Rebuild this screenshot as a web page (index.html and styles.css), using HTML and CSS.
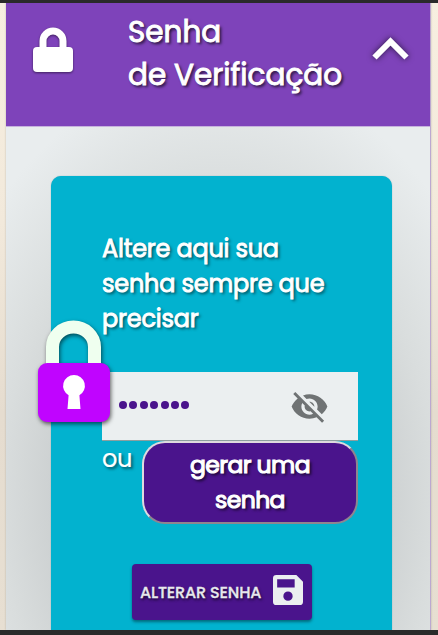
FILE: index.html
```html
<!DOCTYPE html>
<html lang="pt-BR">
<head>
<meta charset="utf-8">
<meta name="viewport" content="width=device-width, initial-scale=1">
<title>Senha de Verificação</title>
<link rel="stylesheet" href="styles.css">
</head>
<body>
<main class="panel">
  <header class="panel-header">
    <svg class="header-lock" viewBox="0 0 40 46" aria-hidden="true">
      <path d="M10 23V14a10 10 0 0 1 20 0v9" fill="none" stroke="#fff" stroke-width="7"/>
      <rect y="20" width="40" height="25" rx="4" fill="#fff"/>
    </svg>
    <h1 class="title">Senha<br>de Verificação</h1>
    <svg class="chevron" viewBox="0 0 38 24" aria-hidden="true">
      <path d="M2.5 20.5 18.5 4.5 34.5 20.5" fill="none" stroke="#fff" stroke-width="6"/>
    </svg>
  </header>
  <section class="panel-body">
    <form class="card">
      <p class="intro">Altere aqui sua<br>senha sempre que<br>precisar</p>
      <div class="field">
        <svg class="padlock" viewBox="0 0 84 114" aria-hidden="true">
          <path d="M14.5 52V33a21 20 0 0 1 42 0v19" fill="none" stroke="#efffef" stroke-width="13"/>
          <rect y="49" width="72" height="59" rx="9" fill="#c004ff"/>
          <path d="M36 61a10.8 10.8 0 0 1 5.4 20.2L42.5 95h-13l1.100-13.800A10.800 10.800 0 0 1 36 61z" fill="#fff"/>
        </svg>
        <div class="dots" role="img" aria-label="Senha oculta"><i></i><i></i><i></i><i></i><i></i><i></i><i></i></div>
        <svg class="eye" viewBox="0 0 24 24" aria-hidden="true">
          <path d="M12 7c2.760 0 5 2.240 5 5 0 .65-.13 1.260-.36 1.830l2.920 2.920c1.510-1.260 2.700-2.890 3.430-4.750-1.730-4.390-6-7.500-11-7.500-1.400 0-2.740.25-3.980.7l2.160 2.160C10.740 7.130 11.350 7 12 7zM2 4.270l2.280 2.280.46.46C3.080 8.300 1.780 10.020 1 12c1.730 4.390 6 7.500 11 7.500 1.550 0 3.030-.3 4.380-.84l.42.42L19.730 22 21 20.730 3.270 3 2 4.270zM7.530 9.800l1.550 1.550c-.05.21-.08.43-.08.65 0 1.660 1.340 3 3 3 .22 0 .44-.03.65-.08l1.550 1.550c-.67.33-1.410.53-2.200.53-2.760 0-5-2.240-5-5 0-.79.2-1.530.53-2.200zm4.310-.78 3.150 3.150.02-.16c0-1.660-1.340-3-3-3l-.17.01z"/>
        </svg>
      </div>
      <div class="generate-row">
        <span class="or">ou</span>
        <button class="generate" type="button">gerar uma<br>senha</button>
      </div>
      <button class="save" type="button">
        <span>ALTERAR SENHA</span>
        <svg class="disk" viewBox="3 3 18 18" aria-hidden="true">
          <path d="M17 3H5a2 2 0 0 0-2 2v14a2 2 0 0 0 2 2h14a2 2 0 0 0 2-2V7l-4-4zm-5 15.500a2.800 2.800 0 1 1 0-5.600 2.800 2.800 0 0 1 0 5.600zM16 10.500H5.500v-5H16v5z"/>
        </svg>
      </button>
    </form>
  </section>
</main>
</body>
</html>
```
FILE: styles.css
```css
* { box-sizing: border-box; }

body {
  margin: 0;
  height: 635px;
  overflow: hidden;
  padding: 0 7px 0 6px;
  border-top: 3px solid #2a2a2a;
  border-bottom: 5px solid #2a2a2a;
  background: linear-gradient(#f7efe0, #f2e9db 35%, #e5dccf 65%, #e7dfd2);
  font-family: Poppins, sans-serif;
  color: #fff;
}

.panel {
  height: 627px;
  display: flex;
  flex-direction: column;
  border-right: 1px solid #bba8d0;
  box-shadow: 0 0 2px rgba(0, 0, 0, .2);
}

.panel-header {
  height: 124px;
  flex: none;
  display: flex;
  align-items: flex-start;
  padding: 7px 20px 0 27px;
  background: #7e43ba;
  border-bottom: 1px solid #c6b2dd;
}

.header-lock {
  width: 40px;
  height: 46px;
  margin-top: 17px;
  flex: none;
  overflow: visible;
  filter: drop-shadow(0 1px 1px rgba(0, 0, 0, .5));
}

.title {
  margin: 0 0 0 55px;
  flex: 1;
  font-size: 29.500px;
  line-height: 43px;
  font-weight: 400;
  white-space: nowrap;
  -webkit-text-stroke: .9px #fff;
  text-shadow: 2px 2px 3px rgba(0, 0, 0, .75);
}

.chevron {
  width: 38px;
  height: 24px;
  margin: 27px 0 0;
  flex: none;
  overflow: visible;
  filter: drop-shadow(0 0 3px rgba(0, 0, 0, .65));
}

.panel-body {
  flex: 1;
  padding: 49px 38px 0 45px;
  background: radial-gradient(ellipse 290px 410px at 50% 74%, #b9bdbe 0%, #c8cccd 50%, #d9dddd 75%, #e9edee 105%);
}

.card {
  height: 454px;
  padding: 55px 34px 0 51px;
  border-radius: 10px 10px 0 0;
  background: #02b2cf;
  box-shadow: 0 0 1px rgba(0, 110, 130, .6);
}

.intro {
  margin: 0;
  font-size: 24px;
  line-height: 35px;
  font-weight: 400;
  letter-spacing: -.22px;
  white-space: nowrap;
  -webkit-text-stroke: .9px #fff;
  text-shadow: 2px 2px 3px rgba(0, 0, 0, .6);
}

.field {
  position: relative;
  width: 256px;
  height: 69px;
  margin-top: 36px;
  display: flex;
  align-items: center;
  justify-content: space-between;
  padding: 0 29px 0 17px;
  background: #ebeff0;
  border-bottom: 1px solid #8d9f9f;
}

.padlock {
  position: absolute;
  left: -64px;
  top: -58px;
  width: 84px;
  height: 114px;
  overflow: visible;
  filter: drop-shadow(1px 2px 2px rgba(0, 0, 0, .6));
}

.dots { display: flex; gap: 2.400px; margin-top: -3px; }
.dots i { width: 8px; height: 8px; border-radius: 50%; background: #4a148c; }
.eye { width: 39px; height: 39px; margin-top: 1px; fill: #6f7374; }

.generate-row { display: flex; height: 83px; }

.or {
  width: 40px;
  font-size: 24px;
  line-height: 35px;
  letter-spacing: -.3px;
  -webkit-text-stroke: .2px #fff;
  text-shadow: 2px 2px 3px rgba(0, 0, 0, .55);
}

.generate {
  width: 216px;
  height: 83px;
  padding: 0 0 1px;
  border: 2px solid;
  border-color: #dedade #8f858f #8f858f #dedade;
  border-radius: 23px;
  background: #4a148c;
  color: #fff;
  font: 400 23.500px/35px Poppins, sans-serif;
  letter-spacing: -.6px;
  -webkit-text-stroke: 1.100px #fff;
  text-shadow: 2px 2px 3px rgba(0, 0, 0, .8);
}

.save {
  width: 180px;
  height: 56px;
  margin: 40px 0 0 30px;
  padding: 0 9px 4px;
  display: flex;
  align-items: center;
  justify-content: space-between;
  border: 0;
  border-radius: 4px;
  background: #4a148c;
  color: #e7e9ec;
  font: 500 16px/24px Poppins, sans-serif;
  letter-spacing: -.15px;
  white-space: nowrap;
  -webkit-text-stroke: .3px #e7e9ec;
  text-shadow: 1px 2px 3px rgba(0, 0, 0, .7);
  box-shadow: 0 2px 3px rgba(0, 0, 0, .4);
}

.save span { margin: 5px 0 0 -1px; }
.disk { width: 30px; height: 30px; flex: none; fill: #ebeff0; }
```
